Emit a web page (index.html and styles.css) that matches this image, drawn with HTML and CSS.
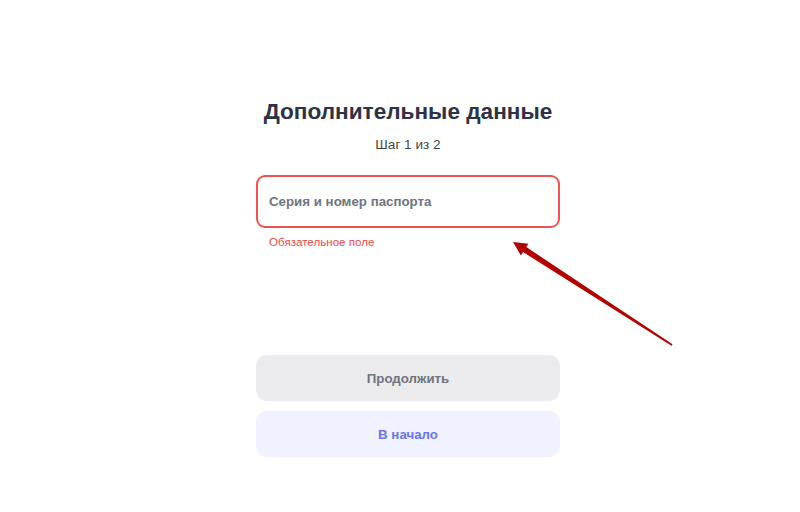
FILE: index.html
```html
<!DOCTYPE html>
<html lang="ru">
<head>
<meta charset="utf-8">
<title>Дополнительные данные</title>
<link rel="stylesheet" href="styles.css">
</head>
<body>
<div class="page">
  <div class="form">
    <h1 class="title">Дополнительные данные</h1>
    <div class="step">Шаг 1 из 2</div>
    <div class="field">
      <input class="input" type="text" placeholder="Серия и номер паспорта">
    </div>
    <div class="error">Обязательное поле</div>
    <div class="actions">
      <button class="btn btn-primary" type="button">Продолжить</button>
      <button class="btn btn-secondary" type="button">В начало</button>
    </div>
  </div>
</div>
<svg class="arrow" width="800" height="512" viewBox="0 0 800 512" xmlns="http://www.w3.org/2000/svg">
  <polygon points="513,242 528.5,243.7 526.3,247.1 672.5,344.2 671.5,345.8 523.1,252.1 520.9,255.5" fill="#b30000"/>
</svg>
</body>
</html>
```

FILE: styles.css
```css
html, body {
  margin: 0;
  padding: 0;
  background: #ffffff;
}

body {
  font-family: "Liberation Sans", Arial, sans-serif;
  width: 800px;
  height: 512px;
  overflow: hidden;
  position: relative;
}

.page {
  display: flex;
  justify-content: center;
  padding-left: 16px;
  padding-top: 98px;
}

.form {
  width: 304px;
  display: flex;
  flex-direction: column;
}

.title {
  margin: 0;
  font-size: 22.6px;
  line-height: 28px;
  font-weight: 700;
  color: #2e3244;
  text-align: center;
}

.step {
  margin-top: 11px;
  font-size: 13.6px;
  line-height: 16px;
  color: #444548;
  text-align: center;
}

.field {
  margin-top: 22px;
}

.input {
  box-sizing: border-box;
  width: 100%;
  height: 53px;
  border: 2px solid #ef5350;
  border-radius: 9px;
  padding: 0 11px;
  font-family: inherit;
  font-size: 13.3px;
  font-weight: 700;
  color: #333;
  outline: none;
  background: #fff;
}

.input::placeholder {
  color: #6f7480;
  opacity: 1;
}

.error {
  margin-top: 6px;
  padding-left: 13px;
  font-size: 11.6px;
  line-height: 16px;
  color: #f04848;
}

.actions {
  margin-top: 105px;
  display: flex;
  flex-direction: column;
  gap: 10px;
}

.btn {
  height: 46px;
  border: none;
  border-radius: 11px;
  font-family: inherit;
  font-size: 13.3px;
  font-weight: 700;
  cursor: pointer;
}

.btn-primary {
  background: #ebebed;
  color: #70737d;
}

.btn-secondary {
  background: #f0f2ff;
  color: #6a74ee;
}

.arrow {
  position: absolute;
  left: 0;
  top: 0;
  pointer-events: none;
}
```
